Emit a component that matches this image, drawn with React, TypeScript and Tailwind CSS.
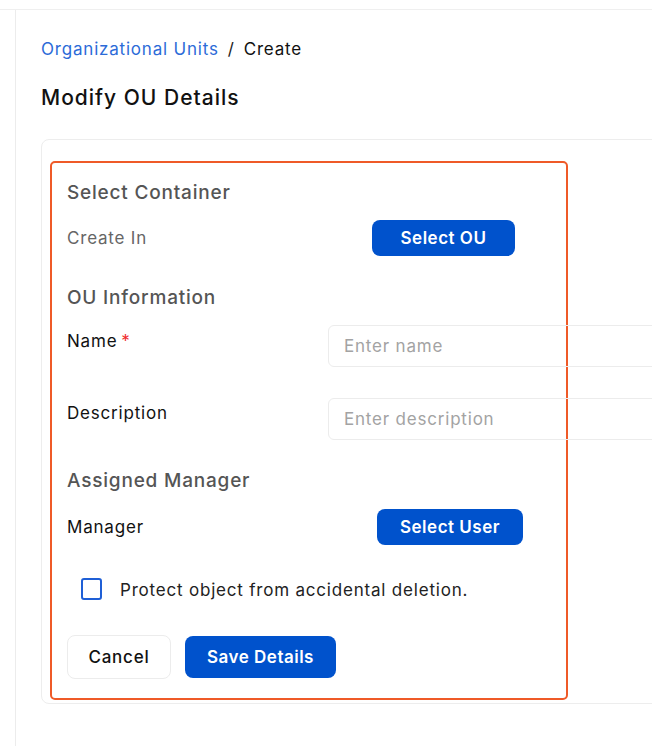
import { useState } from "react";

const font = { fontFamily: "Inter, 'Noto Sans', sans-serif" };

export default function App() {
  const [name, setName] = useState("");
  const [description, setDescription] = useState("");
  const [protect, setProtect] = useState(false);

  return (
    <div
      className="min-h-[746px] w-[652px] overflow-hidden bg-white pt-[9px] tracking-[0.8px]"
      style={font}
    >
      <div className="border-t border-[#efefef]">
        <div className="ml-[15px] min-h-[736px] border-l border-[#ececec] pl-[25px] pt-[27px]">
          {/* breadcrumb */}
          <div className="flex items-center gap-[9px] text-[17px] leading-6">
            <span className="text-[#2c6bd8]">Organizational Units</span>
            <span className="text-[#222]">/</span>
            <span className="text-[#111]">Create</span>
          </div>

          <h1 className="mt-[23px] text-[21px] font-medium leading-7 tracking-[1px] text-[#111]">
            Modify OU Details
          </h1>

          {/* card */}
          <div className="mt-[27px] w-[640px] rounded-lg border border-[#ededed] pb-[3px] pl-[8px] pt-[21px]">
            <div className="w-[518px] rounded-[5px] border-2 border-[#ef5a28] pb-[19px] pl-[15px] pt-[16px]">
              <h2 className="text-[19px] font-medium leading-7 text-[#555]">Select Container</h2>
              <div className="mt-[13px] flex h-9 items-center">
                <span className="w-[305px] shrink-0 pt-[2px] text-[17px] text-[#666]">Create In</span>
                <button className="h-9 w-[143px] shrink-0 rounded-lg bg-[#0052cc] pt-[1px] text-[17px] font-semibold tracking-[0.5px] text-white">
                  Select OU
                </button>
              </div>

              <h2 className="mt-[28px] text-[19px] font-medium leading-7 text-[#555]">OU Information</h2>
              <div className="mt-[13px] flex items-start">
                <label className="mt-[4px] w-[261px] shrink-0 text-[17px] leading-6 text-[#111]">
                  Name<span className="ml-1 text-[#ef2b2b]">*</span>
                </label>
                <input
                  value={name}
                  onChange={(e) => setName(e.target.value)}
                  placeholder="Enter name"
                  className="h-[42px] w-[360px] shrink-0 rounded-md border border-[#ececec] bg-transparent px-[15px] text-[17px] text-[#111] outline-none placeholder:text-[#a3a3a3]"
                />
              </div>
              <div className="mt-[31px] flex items-start">
                <label className="mt-[3px] w-[261px] shrink-0 text-[17px] leading-6 text-[#111]">Description</label>
                <input
                  value={description}
                  onChange={(e) => setDescription(e.target.value)}
                  placeholder="Enter description"
                  className="h-[42px] w-[360px] shrink-0 rounded-md border border-[#ececec] bg-transparent px-[15px] text-[17px] text-[#111] outline-none placeholder:text-[#a3a3a3]"
                />
              </div>

              <h2 className="mt-[27px] text-[19px] font-medium leading-7 text-[#555]">Assigned Manager</h2>
              <div className="mt-[14px] flex h-9 items-center">
                <span className="w-[310px] shrink-0 pt-[2px] text-[17px] text-[#111]">Manager</span>
                <button className="h-9 w-[146px] shrink-0 rounded-lg bg-[#0052cc] pt-[1px] text-[17px] font-semibold tracking-[0.5px] text-white">
                  Select User
                </button>
              </div>

              <label className="mt-[32px] ml-[14px] flex h-6 cursor-pointer items-center gap-[18px] text-[17px] leading-6 text-[#222]">
                <span
                  onClick={() => setProtect(!protect)}
                  className="h-[22px] w-[21px] shrink-0 rounded-[3px] border-2 border-[#1f5fd6] bg-white"
                />
                <span className="pt-[2px]">Protect object from accidental deletion.</span>
              </label>

              <div className="mt-[34px] flex items-center gap-[14px]">
                <button className="h-[44px] w-[104px] rounded-lg border border-[#ececec] bg-white pt-[1px] text-[17px] font-medium text-[#111]">
                  Cancel
                </button>
                <button className="h-[42px] w-[151px] rounded-lg bg-[#0052cc] pt-[1px] text-[17px] font-semibold tracking-[0.5px] text-white">
                  Save Details
                </button>
              </div>
            </div>
          </div>
        </div>
      </div>
    </div>
  );
}
